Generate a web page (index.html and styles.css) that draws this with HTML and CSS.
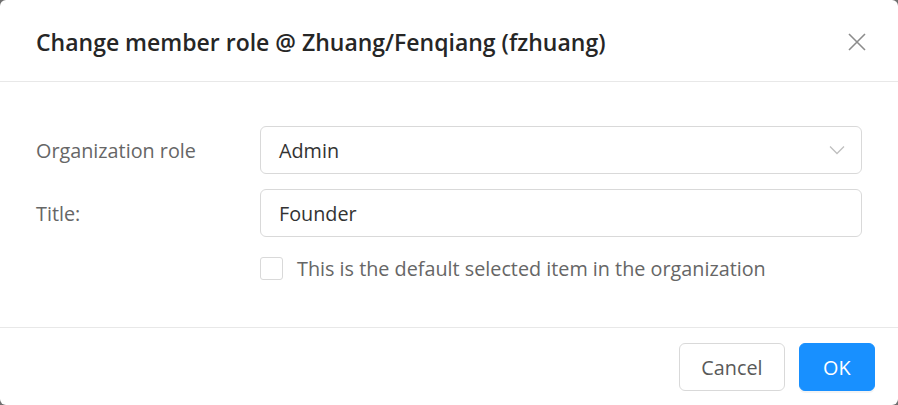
FILE: index.html
```html
<!DOCTYPE html>
<html lang="en">
<head>
  <meta charset="UTF-8">
  <title>Change member role</title>
  <link rel="stylesheet" href="styles.css">
</head>
<body>
  <div class="modal">
    <div class="modal-header">
      <h2>Change member role @ Zhuang/Fenqiang (fzhuang)</h2>
      <button class="close" aria-label="Close">
        <svg width="18" height="18" viewBox="0 0 18 18"><path d="M1 1L17 17M17 1L1 17" stroke="#8c8c8c" stroke-width="1.6" fill="none"/></svg>
      </button>
    </div>
    <div class="modal-body">
      <div class="row">
        <label>Organization role</label>
        <div class="select">
          <span>Admin</span>
          <svg width="16" height="10" viewBox="0 0 16 10"><path d="M1 1.5L8 8.5L15 1.5" stroke="#bfbfbf" stroke-width="1.3" fill="none"/></svg>
        </div>
      </div>
      <div class="row">
        <label>Title:</label>
        <div class="input">Founder</div>
      </div>
      <div class="row check-row">
        <label></label>
        <div class="check">
          <span class="box"></span>
          <span>This is the default selected item in the organization</span>
        </div>
      </div>
    </div>
    <div class="modal-footer">
      <button class="btn">Cancel</button>
      <button class="btn primary">OK</button>
    </div>
  </div>
</body>
</html>
```

FILE: styles.css
```css
body {
  margin: 0;
  background: #6f6f6f;
  font-family: "Open Sans", "Noto Sans", sans-serif;
}
.modal {
  width: 898px;
  height: 405px;
  background: #fff;
  border-radius: 6px;
  display: flex;
  flex-direction: column;
  overflow: hidden;
}
.modal-header {
  height: 82px;
  border-bottom: 1px solid #e8e8e8;
  display: flex;
  align-items: center;
  justify-content: space-between;
  padding: 3px 32px 0 36px;
  box-sizing: border-box;
}
.modal-header h2 {
  margin: 0;
  font-size: 23px;
  font-weight: 600;
  color: #262626;
}
.close {
  border: none;
  background: none;
  padding: 0;
  display: flex;
  cursor: pointer;
}
.modal-body {
  padding: 44px 36px 0 36px;
  height: 245px;
  box-sizing: border-box;
}
.row {
  display: flex;
  align-items: center;
  margin-bottom: 15px;
}
.row label {
  width: 224px;
  flex-shrink: 0;
  font-size: 19.8px;
  color: #666;
}
.select, .input {
  flex: 1;
  height: 48px;
  box-sizing: border-box;
  border: 1px solid #d9d9d9;
  border-radius: 6px;
  padding: 0 16px 0 18px;
  display: flex;
  align-items: center;
  justify-content: space-between;
  font-size: 19.8px;
  color: #333;
}
.check-row {
  margin-top: 18px;
}
.check {
  display: flex;
  align-items: center;
  font-size: 19.8px;
  color: #666;
}
.box {
  width: 23px;
  height: 23px;
  box-sizing: border-box;
  border: 1px solid #d9d9d9;
  border-radius: 3px;
  margin-right: 14px;
}
.modal-footer {
  border-top: 1px solid #e8e8e8;
  flex: 1;
  display: flex;
  justify-content: flex-end;
  align-items: flex-start;
  gap: 14px;
  padding: 15px 23px 0 0;
}
.btn {
  height: 48px;
  padding: 0 21px;
  font-family: inherit;
  font-size: 19.8px;
  color: #595959;
  background: #fff;
  border: 1px solid #d9d9d9;
  border-radius: 6px;
  cursor: pointer;
}
.btn.primary {
  background: #1890ff;
  border-color: #1890ff;
  color: #fff;
  padding: 0 23.5px;
  box-shadow: 0 2px 0 rgba(0,0,0,0.045);
}
```
